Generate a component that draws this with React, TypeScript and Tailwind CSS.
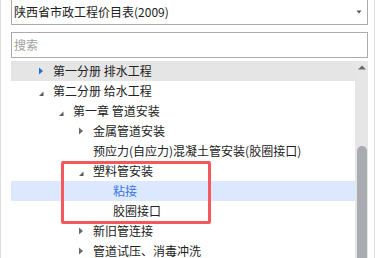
import React from 'react';

type Node = {
    label: string;
    level: number;
    arrow?: 'open' | 'closed';
    hover?: boolean;
    selected?: boolean;
};

const rows: Node[] = [
    { label: '第一分册 排水工程', level: 0, arrow: 'closed', hover: true },
    { label: '第二分册 给水工程', level: 0, arrow: 'open' },
    { label: '第一章 管道安装', level: 1, arrow: 'open' },
    { label: '金属管道安装', level: 2, arrow: 'closed' },
    { label: '预应力(自应力)混凝土管安装(胶圈接口)', level: 2 },
    { label: '塑料管安装', level: 2, arrow: 'open' },
    { label: '粘接', level: 3, selected: true },
    { label: '胶圈接口', level: 3 },
    { label: '新旧管连接', level: 2, arrow: 'closed' },
    { label: '管道试压、消毒冲洗', level: 2, arrow: 'closed' },
];

// indent per level is 20px, text sits 18px after the arrow box
const indent = ['pl-[24px]', 'pl-[44px]', 'pl-[64px]', 'pl-[84px]'];

const Arrow = ({ kind, hover }: { kind?: 'open' | 'closed'; hover?: boolean }) => (
    <span className="w-[18px] h-[20px] shrink-0">
        {kind && (
            <svg width="18" height="20" viewBox="0 0 18 20">
                {kind === 'closed' ? (
                    <polygon points="4,6.5 8,10 4,13.5" fill={hover ? '#1f6fdd' : '#6b6b6b'} />
                ) : (
                    <polygon points="8.5,10.5 8.5,15 4,15" fill="#5c5c5c" />
                )}
            </svg>
        )}
    </span>
);

const App = () => {
    return (
        <div className="w-[376px] h-[258px] overflow-hidden bg-white font-['Noto_Sans_CJK_SC','Noto_Sans',sans-serif] text-[12px] text-[#222]">
            <div className="w-[375px] h-full border-l border-r border-[#dedede] pl-[10px] pr-[6px] flex flex-col">
                {/* dropdown */}
                <div className="-mt-px h-[26px] shrink-0 border border-[#ababab] flex items-center pl-[2px] pr-[3px]">
                    <span className="flex-1 leading-none">陕西省市政工程价目表(2009)</span>
                    <svg width="8" height="6" viewBox="0 0 8 6" className="mr-[1px]">
                        <polygon points="1.5,1.5 6.5,1.5 4,4.5" fill="#555" />
                    </svg>
                </div>

                {/* search */}
                <div className="mt-[7px] h-[26px] shrink-0 border border-[#ababab] flex items-center pl-[2px]">
                    <span className="text-[#a0a0a0] leading-none">搜索</span>
                </div>

                {/* tree */}
                <div className="mt-[3px] flex flex-1 min-h-0">
                    <div className="relative flex-1">
                        {rows.map((r) => (
                            <div
                                key={r.label}
                                className={`h-[20px] flex items-center whitespace-nowrap ${indent[r.level]} ${
                                    r.hover ? 'bg-[#e5e5e5]' : r.selected ? 'bg-[#dbe8fd]' : ''
                                }`}
                            >
                                <Arrow kind={r.arrow} hover={r.hover} />
                                <span className={`leading-none ${r.selected ? 'text-[#3a74ec]' : ''}`}>{r.label}</span>
                            </div>
                        ))}
                        {/* red highlight box */}
                        <div className="absolute left-[50px] top-[100px] w-[150px] h-[63px] border-[3px] border-[#f4585c] rounded-[2px]" />
                    </div>

                    {/* scrollbar */}
                    <div className="w-[13px] bg-[#e6e6e7] flex flex-col items-center">
                        <svg width="10" height="8" viewBox="0 0 10 8" className="mt-[2px]">
                            <polygon points="1,6.5 9,6.5 5,2.5" fill="#6a6a6a" />
                        </svg>
                        <div className="mt-[75px] w-[10px] flex-1 bg-[#a8abaf] rounded-t-full" />
                    </div>
                </div>
            </div>
        </div>
    );
};

export default App;
